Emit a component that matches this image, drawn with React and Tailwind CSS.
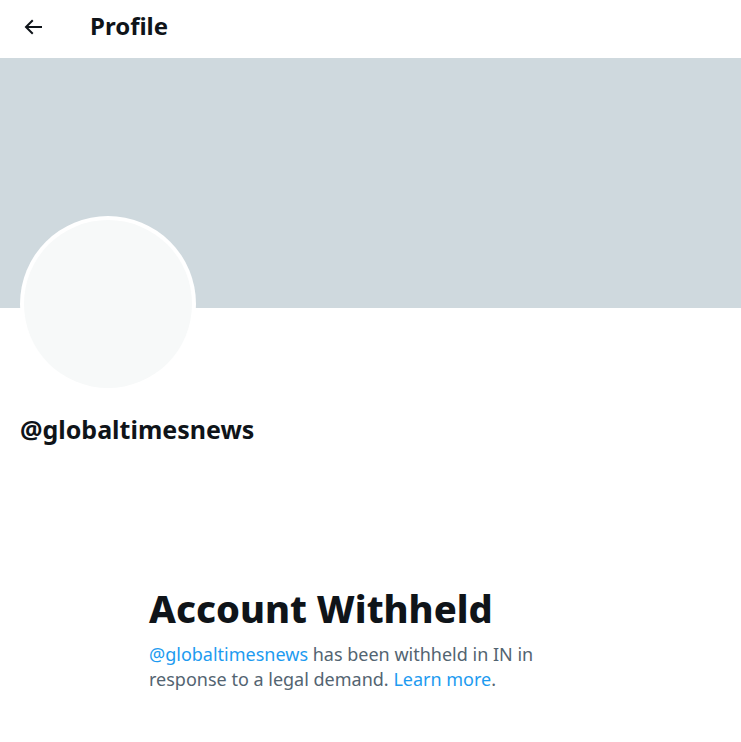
export default function App() {
  const font = { fontFamily: '"Segoe UI", "Noto Sans", "Open Sans", sans-serif' };
  return (
    <div className="w-[741px] h-[742px] bg-white overflow-hidden" style={font}>
      <div className="h-[58px] flex items-center">
        <div className="w-[90px] pl-[21px] flex items-center -mt-[4px]">
          <svg width="24" height="24" viewBox="0 0 24 24" className="text-[#0f1419]">
            <path fill="currentColor" d="M7.414 13l5.043 5.04-1.414 1.42L3.586 12l7.457-7.46 1.414 1.42L7.414 11H21v2H7.414z" />
          </svg>
        </div>
        <div className="text-[24px] font-bold text-[#0f1419] leading-none -mt-[6px]">Profile</div>
      </div>
      <div className="h-[250px] bg-[#cfd9de]" />
      <div className="px-[20px]">
        <div className="-mt-[92px] w-[176px] h-[176px] rounded-full bg-white p-[4px]">
          <div className="w-full h-full rounded-full bg-[#f7f9f9]" />
        </div>
        <div className="mt-[22px] text-[25px] font-bold text-[#0f1419] leading-[30px]">@globaltimesnews</div>
      </div>
      <div className="pl-[149px] mt-[142px]">
        <div className="text-[38px] font-extrabold text-[#0f1419] leading-[44px]">Account Withheld</div>
        <div className="mt-[12px] w-[400px] text-[18px] leading-[25px] text-[#536471]">
          <span className="text-[#1d9bf0]">@globaltimesnews</span> has been withheld in IN in response to a legal demand.{" "}
          <span className="text-[#1d9bf0]">Learn more</span>.
        </div>
      </div>
    </div>
  );
}
